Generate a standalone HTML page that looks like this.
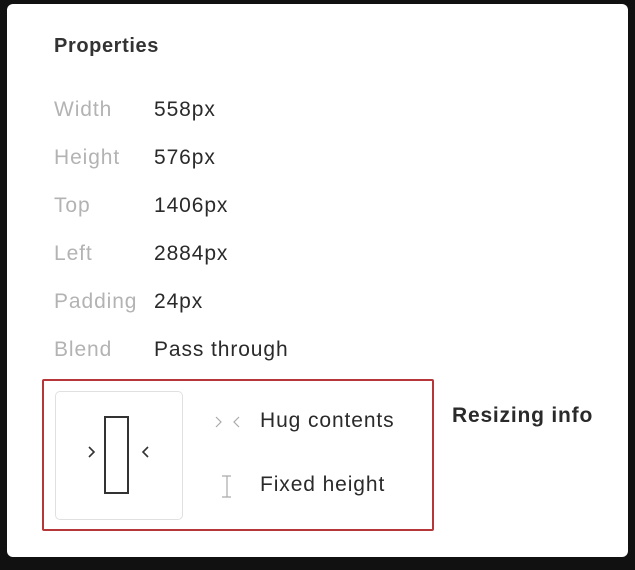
<!DOCTYPE html>
<html><head><style>
body{margin:0;width:635px;height:570px;background:#111;position:relative;overflow:hidden;font-family:"Liberation Sans",sans-serif}
.card{position:absolute;left:7px;top:4px;width:621px;height:553px;background:#fff;border-radius:6px}
.t{position:absolute;white-space:nowrap;letter-spacing:0.9px}
.h{left:54px;top:35px;font-size:20px;font-weight:bold;color:#333;letter-spacing:0.6px}
.l{left:54px;font-size:21px;color:#b3b3b3}
.v{left:154px;font-size:21px;color:#2a2a2a}
</style></head><body>
<div class="card"></div>
<div class="t h">Properties</div>
<div class="t l" style="top:98px">Width</div><div class="t v" style="top:98px">558px</div>
<div class="t l" style="top:146px">Height</div><div class="t v" style="top:146px">576px</div>
<div class="t l" style="top:194px">Top</div><div class="t v" style="top:194px">1406px</div>
<div class="t l" style="top:242px">Left</div><div class="t v" style="top:242px">2884px</div>
<div class="t l" style="top:290px">Padding</div><div class="t v" style="top:290px">24px</div>
<div class="t l" style="top:338px">Blend</div><div class="t v" style="top:338px">Pass through</div>
<div style="position:absolute;left:42px;top:379px;width:388px;height:148px;border:2px solid #b6373a;border-radius:2px"></div>
<div style="position:absolute;left:55px;top:391px;width:126px;height:127px;border:1px solid #e0e0e0;border-radius:5px"></div>
<svg style="position:absolute;left:0;top:0" width="635" height="570">
<rect x="105" y="417" width="23" height="76" fill="none" stroke="#333" stroke-width="2"/>
<path d="M89 447l5 5-5 5M148 447l-5 5 5 5" fill="none" stroke="#333" stroke-width="1.6"/>
<path d="M216 417l5 5-5 5M239 417l-5 5 5 5" fill="none" stroke="#aaa" stroke-width="1.2"/>
<path d="M222 476h9M222 497h9M227 476v21" fill="none" stroke="#aaa" stroke-width="1.2"/>
</svg>
<div class="t" style="left:260px;top:409px;font-size:21px;color:#2a2a2a">Hug contents</div>
<div class="t" style="left:260px;top:473px;font-size:21px;color:#2a2a2a">Fixed height</div>
<div class="t" style="left:452px;top:404px;font-size:21px;font-weight:bold;color:#2a2a2a;letter-spacing:0.8px">Resizing info</div>
</body></html>
